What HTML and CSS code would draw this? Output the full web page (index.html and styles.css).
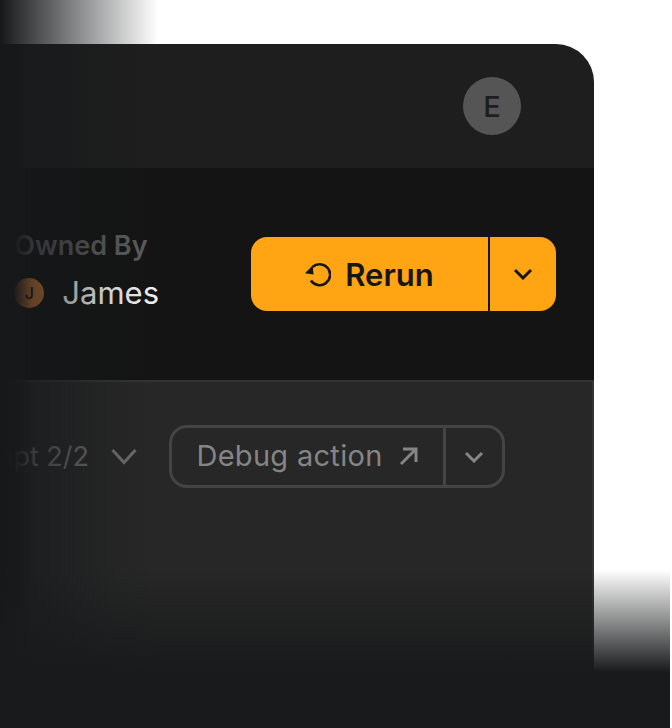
FILE: index.html
```html
<!DOCTYPE html>
<html lang="en">
<head>
    <meta charset="UTF-8">
    <meta name="viewport" content="width=device-width, initial-scale=1.0">
    <title>Run details</title>
    <link rel="stylesheet" href="styles.css">
</head>
<body>
    <div class="stage">
        <div class="panel">
            <div class="top-bar">
                <div class="user-badge">E</div>
            </div>

            <div class="action-bar">
                <div class="owner">
                    <div class="owner-label">Owned By</div>
                    <div class="owner-row">
                        <span class="owner-avatar">J</span>
                        <span class="owner-name">James</span>
                    </div>
                </div>
                <div class="rerun-group">
                    <button class="rerun-main">
                        <svg class="rerun-icon" width="26" height="26" viewBox="0 0 26 26">
                            <path d="M7.5 6a10.500 10.500 0 1 1-1.600 13.600" fill="none" stroke="#161616" stroke-width="2.6"/>
                            <path d="M0 12.200 7.600 4.600 8.600 13.600z" fill="#161616"/>
                        </svg>
                        Rerun
                    </button>
                    <button class="rerun-more">
                        <svg width="20" height="12" viewBox="0 0 20 12"><path d="M2 2l8 8 8-8" fill="none" stroke="#161616" stroke-width="3"/></svg>
                    </button>
                </div>
            </div>

            <div class="content">
                <div class="attempt">
                    <span class="attempt-text">Attempt 2/2</span>
                    <svg width="26" height="17" viewBox="0 0 26 17"><path d="M1.500 2l11.500 12.500L24.500 2" fill="none" stroke="#6e6e6e" stroke-width="3"/></svg>
                </div>
                <div class="debug-group">
                    <button class="debug-main">
                        Debug action
                        <svg width="20" height="20" viewBox="0 0 20 20"><path d="M3 18 17 4M5 3h13v13" fill="none" stroke="#858585" stroke-width="3"/></svg>
                    </button>
                    <button class="debug-more">
                        <svg width="20" height="12" viewBox="0 0 20 12"><path d="M2 2l8 8 8-8" fill="none" stroke="#858585" stroke-width="3"/></svg>
                    </button>
                </div>
            </div>
        </div>

        <!-- fades lying over the panel -->
        <div class="fade-top"></div>
        <div class="fade-left"></div>
        <div class="fade-bottom"></div>
    </div>
</body>
</html>
```

FILE: styles.css
```css
* {
    margin: 0;
    padding: 0;
    box-sizing: border-box;
    font-family: 'Inter', 'Liberation Sans', sans-serif;
}

html, body {
    height: 100%;
    background: #fff;
    overflow: hidden;
}

.stage {
    position: relative;
    width: 670px;
    height: 728px;
    overflow: hidden;
    padding-top: 44px;
}

.panel {
    width: 594px;
    height: 684px;
    background: #1e1e1e;
    border-top-right-radius: 38px;
    overflow: hidden;
    display: flex;
    flex-direction: column;
}

.top-bar {
    height: 124px;
    flex-shrink: 0;
    display: flex;
    justify-content: flex-end;
    align-items: flex-start;
    padding: 33px 73px 0 0;
}

.user-badge {
    width: 58px;
    height: 58px;
    border-radius: 50%;
    background: #555;
    color: #1e1e1e;
    font-size: 29px;
    font-weight: 500;
    display: flex;
    align-items: center;
    justify-content: center;
}

.action-bar {
    height: 212px;
    flex-shrink: 0;
    background: #141414;
    display: flex;
    justify-content: flex-end;
    align-items: flex-start;
    gap: 92px;
    padding: 63px 38px 0 0;
}

.owner-label {
    font-size: 27px;
    line-height: 30px;
    font-weight: 600;
    color: #5c5c5c;
    white-space: nowrap;
}

.owner-row {
    display: flex;
    align-items: center;
    gap: 18px;
    margin-top: 14px;
}

.owner-avatar {
    width: 30px;
    height: 30px;
    border-radius: 50%;
    background: #d07c38;
    color: #1a1108;
    font-size: 16px;
    font-weight: 500;
    display: flex;
    align-items: center;
    justify-content: center;
}

.owner-name {
    font-size: 31px;
    line-height: 36px;
    color: #f2f2f2;
}

button {
    border: none;
    background: none;
    cursor: pointer;
    display: flex;
    align-items: center;
    justify-content: center;
}

.rerun-group {
    display: flex;
    flex-shrink: 0;
    width: 305px;
    height: 74px;
    gap: 2px;
    margin-top: 6px;
}

.rerun-main, .rerun-more {
    background: #ffa412;
    height: 100%;
}

.rerun-main {
    width: 237px;
    gap: 14px;
    border-radius: 16px 0 0 16px;
    color: #161616;
    font-size: 31px;
    font-weight: 560;
}

.rerun-more {
    width: 66px;
    border-radius: 0 16px 16px 0;
}

.content {
    flex: 1;
    background: #272727;
    border-top: 2px solid #333;
    border-right: 2px solid #333;
    display: flex;
    justify-content: flex-end;
    align-items: flex-start;
    gap: 32px;
    padding: 43px 87px 0 0;
}

.attempt {
    display: flex;
    align-items: center;
    gap: 22px;
    height: 62px;
}

.attempt-text {
    font-size: 27px;
    color: #6e6e6e;
    white-space: nowrap;
}

.debug-group {
    display: flex;
    flex-shrink: 0;
    width: 336px;
    height: 63px;
    border: 3px solid #444;
    border-radius: 18px;
}

.debug-main {
    width: 274px;
    gap: 15px;
    padding: 0 1px 2px 0;
    border-right: 3px solid #444;
    color: #858585;
    font-size: 29px;
    letter-spacing: 0.3px;
    white-space: nowrap;
}

.debug-more {
    flex: 1;
}

.fade-top {
    position: absolute;
    top: 0;
    left: 0;
    width: 158px;
    height: 44px;
    background: linear-gradient(90deg, #16181a 0%, rgba(22, 24, 26, 0) 100%);
}

.fade-left {
    position: absolute;
    top: 44px;
    left: 0;
    bottom: 0;
    width: 158px;
    background: linear-gradient(90deg, #16181a 0, rgba(22, 24, 26, 0.95) 15px, rgba(22, 24, 26, 0.6) 32px, rgba(22, 24, 26, 0.4) 70px, rgba(22, 24, 26, 0.15) 110px, rgba(22, 24, 26, 0) 158px);
}

.fade-bottom {
    position: absolute;
    left: 0;
    right: 0;
    top: 570px;
    bottom: 0;
    background: linear-gradient(180deg, rgba(25, 26, 27, 0) 0, #191a1b 102px, #191a1b 100%);
}
```
